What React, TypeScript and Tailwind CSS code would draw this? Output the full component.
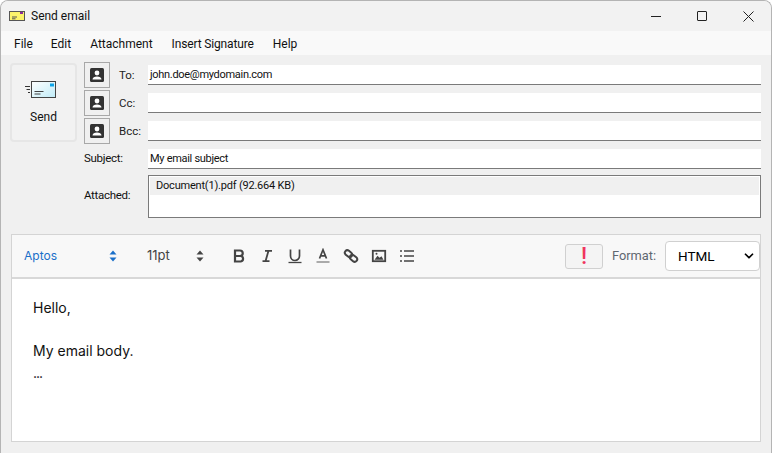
import { ChevronDown } from 'lucide-react'

const ui = 'font-["Roboto","Noto_Sans",sans-serif]'

function SendIcon() {
  return (
    <svg className="-ml-[4px]" width="33" height="18" viewBox="0 0 33 18" fill="none">
      <path d="M0 5.500h5M1.500 8.500h3.500M3 11.500h2" stroke="#333" />
      <defs>
        <linearGradient id="env" x1="0" y1="0" x2="1" y2="1">
          <stop offset="0" stopColor="#ffffff" />
          <stop offset="1" stopColor="#c0ecf8" />
        </linearGradient>
      </defs>
      <rect x="6.500" y="0.500" width="24" height="16" fill="url(#env)" stroke="#444" />
      <rect x="25" y="2.500" width="4" height="3" fill="#0ea5e9" />
      <path d="M9.500 10.500h9M9.500 13h6" stroke="#444" />
    </svg>
  )
}

function ContactButton() {
  return (
    <button className="flex h-[26px] w-[26px] items-center justify-center border border-[#a8a8a8] bg-[#f0f0f0]">
      <svg width="14" height="14" viewBox="0 0 14 14">
        <rect width="14" height="14" rx="1.500" fill="#333" />
        <circle cx="7" cy="5" r="2.400" fill="#fff" />
        <path d="M2.500 11.500c0-2 2-3 4.500-3s4.500 1 4.500 3z" fill="#fff" />
      </svg>
    </button>
  )
}

function Field({ value }: { value?: string }) {
  return (
    <div className="flex h-5 flex-1 items-center border-b border-[#7a7a7a] bg-white pl-[2px] text-[11px] leading-none tracking-[-0.3px] text-[#111]">
      {value}
    </div>
  )
}

function AddressRow({ label, value }: { label: string; value?: string }) {
  return (
    <div className="flex h-7 items-center">
      <ContactButton />
      <span className="w-[38px] pt-px pl-[9px] text-[11.500px] text-[#222]">{label}</span>
      <Field value={value} />
    </div>
  )
}

export default function App() {
  return (
    <div className={`${ui} flex h-[453px] w-[772px] flex-col overflow-hidden rounded-t-lg border border-b-0 border-[#b4b4b4] bg-[#f0f0f0] text-[#111]`}>
      {/* title bar */}
      <div className="flex h-[30px] shrink-0 items-center bg-[#f2f2f2] pl-[8px]">
        <svg width="16" height="10" viewBox="0 0 16 10">
          <rect x="0.500" y="0.500" width="15" height="9" fill="#fbf36c" stroke="#555" />
          <rect x="11" y="1" width="3" height="2" fill="#8a2a9a" />
          <path d="M3 6h5M3 7.800h3.500" stroke="#555" />
        </svg>
        <span className="ml-[6px] text-[12px]">Send email</span>
        <div className="ml-auto flex items-center gap-[36px] pr-[17px]">
          <span className="h-px w-[10px] bg-[#222]" />
          <span className="h-[10px] w-[10px] rounded-[1px] border border-[#222]" />
          <svg width="11" height="11" viewBox="0 0 11 11" stroke="#222">
            <path d="M0.500 0.500l10 10M10.500 0.500l-10 10" />
          </svg>
        </div>
      </div>

      {/* menu */}
      <div className="flex h-6 shrink-0 items-center gap-[19px] bg-[#f9f9f9] pt-[2px] pl-[13px] text-[12px]">
        <span>File</span>
        <span className="-ml-px">Edit</span>
        <span>Attachment</span>
        <span className="tracking-[-0.15px]">Insert Signature</span>
        <span>Help</span>
      </div>

      {/* header form */}
      <div className="flex pt-[6px] pl-[9px] pr-[10px]">
        <button className="mt-[2px] flex h-[79px] w-[67px] shrink-0 flex-col items-center rounded-[4px] border-2 border-[#e6e6e6] bg-[#f2f2f2] pt-[16px] text-[12px]">
          <SendIcon />
          <span className="mt-[9px]">Send</span>
        </button>
        <div className="ml-[7px] flex flex-1 flex-col">
          <AddressRow label="To:" value="john.doe@mydomain.com" />
          <AddressRow label="Cc:" />
          <AddressRow label="Bcc:" />
          <div className="mt-[4px] flex h-5 items-center">
            <span className="w-[64px] text-[11.500px] tracking-[-0.3px]">Subject:</span>
            <Field value="My email subject" />
          </div>
          <div className="mt-[6px] flex h-[43px] items-center">
            <span className="w-[64px] pb-[2px] text-[11.500px] tracking-[-0.3px]">Attached:</span>
            <div className="h-full flex-1 border border-[#7a7a7a] bg-white p-px">
              <div className="h-[18px] bg-[#f0f0f0] pl-[6px] text-[11px] leading-[18px] tracking-[-0.2px]">Document(1).pdf (92.664 KB)</div>
            </div>
          </div>
        </div>
      </div>

      {/* editor */}
      <div className="mx-[10px] mt-[16px] mb-[11px] flex flex-1 flex-col border border-[#d4d4d4] bg-white font-['Inter',sans-serif]">
        <div className="flex h-[44px] shrink-0 items-center border-b-2 border-[#d8d8d8] bg-[#f8f8f8] pl-[12px] text-[12px] text-[#444]">
          <span className="w-[85px] text-[#1a6fc9]">Aptos</span>
          <svg width="8" height="12" viewBox="0 0 8 12" fill="#1a6fc9"><path d="M4 0.500L7.500 4.500H0.500zM4 11.500L0.500 7.500H7.500z" /></svg>
          <span className="ml-[28px] w-[51px] pl-[2px] text-[13px]">11pt</span>
          <svg width="8" height="12" viewBox="0 0 8 12" fill="#444"><path d="M4 0.500L7.500 4.500H0.500zM4 11.500L0.500 7.500H7.500z" /></svg>
          <div className="ml-[27px] flex items-center gap-[12px] text-[#444]">
            {/* bold */}
            <svg width="16" height="16" viewBox="0 0 16 16" fill="none" stroke="#444" strokeWidth="2.200">
              <path d="M4 2.500h5a2.700 2.700 0 0 1 0 5.500H4zM4 8h5.800a2.800 2.800 0 0 1 0 5.500H4z" />
            </svg>
            {/* italic */}
            <svg width="16" height="16" viewBox="0 0 16 16" fill="none" stroke="#444" strokeWidth="1.800">
              <path d="M6 2.800h7M3.500 13.200h7M9.500 2.800L6.500 13.200" />
            </svg>
            {/* underline */}
            <svg width="16" height="16" viewBox="0 0 16 16" fill="none" stroke="#444">
              <path d="M3.500 1.500v6.500a4.500 4.500 0 0 0 9 0V1.500" strokeWidth="1.700" />
              <path d="M1.500 14.500h13" strokeWidth="1.300" />
            </svg>
            {/* text colour */}
            <svg width="16" height="16" viewBox="0 0 16 16" fill="none">
              <path d="M4.500 10.500L8 1.800l3.500 8.700M5.800 7.800h4.400" stroke="#444" strokeWidth="1.700" />
              <rect x="1.500" y="13" width="13" height="2" fill="#aaa" />
            </svg>
            {/* link */}
            <svg width="16" height="16" viewBox="0 0 16 16" fill="none" stroke="#444" strokeWidth="2">
              <rect x="1.500" y="3.200" width="8" height="5" rx="2.500" transform="rotate(40 5.500 5.700)" />
              <rect x="6.500" y="7.800" width="8" height="5" rx="2.500" transform="rotate(40 10.500 10.300)" />
            </svg>
            {/* image */}
            <svg width="16" height="16" viewBox="0 0 16 16">
              <rect x="1.800" y="2.800" width="12.400" height="10.400" fill="none" stroke="#444" strokeWidth="1.800" />
              <path d="M3.500 11.800l3-4 2 2 2-1.500 2 3.500z" fill="#444" />
              <circle cx="5.500" cy="5.800" r="1" fill="#444" />
            </svg>
            {/* list */}
            <svg width="16" height="16" viewBox="0 0 16 16" stroke="#444" strokeWidth="1.600">
              <path d="M5 3h10M5 8h10M5 13h10M1 3h2M1 8h2M1 13h2" />
            </svg>
          </div>
          <div className="ml-auto flex items-center">
            <button className="flex h-[25px] w-[38px] items-center justify-center rounded-[3px] border border-[#d0d0d0] bg-[#f4f4f4] font-['Roboto',sans-serif] text-[23px] font-medium leading-none text-[#f0355e]">!</button>
            <span className="ml-[9px] font-['Roboto',sans-serif] text-[12.800px] text-[#5f6770]">Format:</span>
            <div className="ml-[9px] flex h-[30px] w-[95px] items-center justify-between rounded-[4px] border border-[#d0d0d0] bg-white pl-[12px] pr-[3px] font-['Roboto',sans-serif] text-[13.500px] text-black">
              HTML
              <ChevronDown size={14} strokeWidth={3} />
            </div>
          </div>
        </div>
        <div className="flex-1 px-[21px] pt-[18px] text-[14px] leading-[21.500px] text-[#111]">
          <p>Hello,</p>
          <p className="h-[21.500px]" />
          <p>My email body.</p>
          <p className="tracking-[-1px]">...</p>
        </div>
      </div>
    </div>
  )
}
